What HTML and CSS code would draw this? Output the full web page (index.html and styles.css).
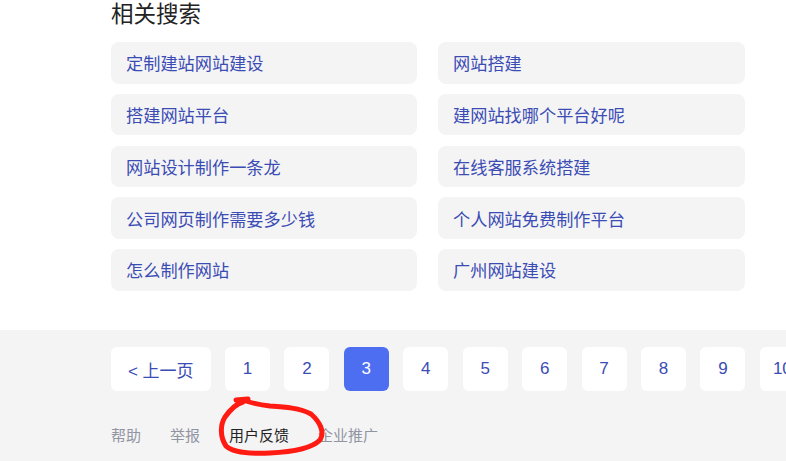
FILE: index.html
```html
<!DOCTYPE html>
<html lang="zh-CN">
  <head>
    <meta charset="UTF-8" />
    <meta name="viewport" content="width=device-width, initial-scale=1.0" />
    <title>相关搜索</title>
    <link rel="stylesheet" href="styles.css">
  </head>
  <body>
    <main class="related">
      <h3 class="related-title">相关搜索</h3>
      <div class="related-grid">
        <a href="#" class="related-item">定制建站网站建设</a>
        <a href="#" class="related-item">网站搭建</a>
        <a href="#" class="related-item">搭建网站平台</a>
        <a href="#" class="related-item">建网站找哪个平台好呢</a>
        <a href="#" class="related-item">网站设计制作一条龙</a>
        <a href="#" class="related-item">在线客服系统搭建</a>
        <a href="#" class="related-item">公司网页制作需要多少钱</a>
        <a href="#" class="related-item">个人网站免费制作平台</a>
        <a href="#" class="related-item">怎么制作网站</a>
        <a href="#" class="related-item">广州网站建设</a>
      </div>
    </main>

    <footer class="page-foot">
      <nav class="pager">
        <a href="#" class="pager-btn pager-prev">&lt; 上一页</a>
        <a href="#" class="pager-btn">1</a>
        <a href="#" class="pager-btn">2</a>
        <span class="pager-btn active">3</span>
        <a href="#" class="pager-btn">4</a>
        <a href="#" class="pager-btn">5</a>
        <a href="#" class="pager-btn">6</a>
        <a href="#" class="pager-btn">7</a>
        <a href="#" class="pager-btn">8</a>
        <a href="#" class="pager-btn">9</a>
        <a href="#" class="pager-btn">10</a>
      </nav>
      <ul class="foot-links">
        <li><a href="#">帮助</a></li>
        <li><a href="#">举报</a></li>
        <li><a href="#" class="current">用户反馈</a></li>
        <li><a href="#">企业推广</a></li>
      </ul>
    </footer>

    <!-- red pen mark around the feedback link -->
    <svg class="pen-mark" width="120" height="64" viewBox="215 395 120 64">
      <path
        d="M236 400 L248 399 M243 402 C236 404 230 410 225 417 C220 425 220 437 226 446 C232 452 250 454 270 453 C292 452 312 448 320 440 C325 432 320 422 311 414 C300 408 285 407 270 406 C260 405 252 403 246 401"
        fill="none"
        stroke="#ff1a12"
        stroke-width="5"
        stroke-linecap="round"
        stroke-linejoin="round"
      />
    </svg>
  </body>
</html>
```

FILE: styles.css
```css
body {
  margin: 0;
  padding: 0;
  font-family: "Liberation Sans", "Noto Sans CJK SC", Arial, sans-serif;
  background-color: #fff;
  position: relative;
  overflow: hidden;
}

a {
  text-decoration: none;
}

.related {
  padding-left: 111px;
  width: 635px;
  padding-bottom: 39.5px;
}

.related-title {
  margin: 0 0 12px;
  font-size: 22.5px;
  line-height: 30px;
  font-weight: normal;
  color: #222;
}

.related-grid {
  display: grid;
  grid-template-columns: 306px 307px;
  column-gap: 21px;
  row-gap: 10.25px;
}

.related-item {
  display: flex;
  align-items: center;
  height: 41.5px;
  padding: 0 15px;
  background-color: #f4f4f5;
  border-radius: 8px;
  font-size: 17.2px;
  color: #3b4cb4;
  white-space: nowrap;
}

.page-foot {
  background-color: #f4f4f4;
  padding: 17px 0 30px 111px;
  min-height: 120px;
}

.pager {
  display: flex;
  gap: 14.44px;
  white-space: nowrap;
}

.pager-btn {
  flex: none;
  width: 45px;
  height: 44px;
  display: flex;
  align-items: center;
  justify-content: center;
  background-color: #fff;
  border-radius: 6px;
  font-size: 17px;
  color: #3b4cb4;
}

.pager-prev {
  width: 99.5px;
}

.pager-btn.active {
  background-color: #4e6ef2;
  color: #fff;
}

.foot-links {
  list-style: none;
  display: flex;
  gap: 29px;
  margin: 35px 0 0;
  padding: 0;
}

.foot-links a {
  font-size: 15px;
  line-height: 20px;
  color: #9195a3;
}

.foot-links a.current {
  color: #222;
}

.pen-mark {
  position: absolute;
  left: 215px;
  top: 395px;
  pointer-events: none;
}
```
